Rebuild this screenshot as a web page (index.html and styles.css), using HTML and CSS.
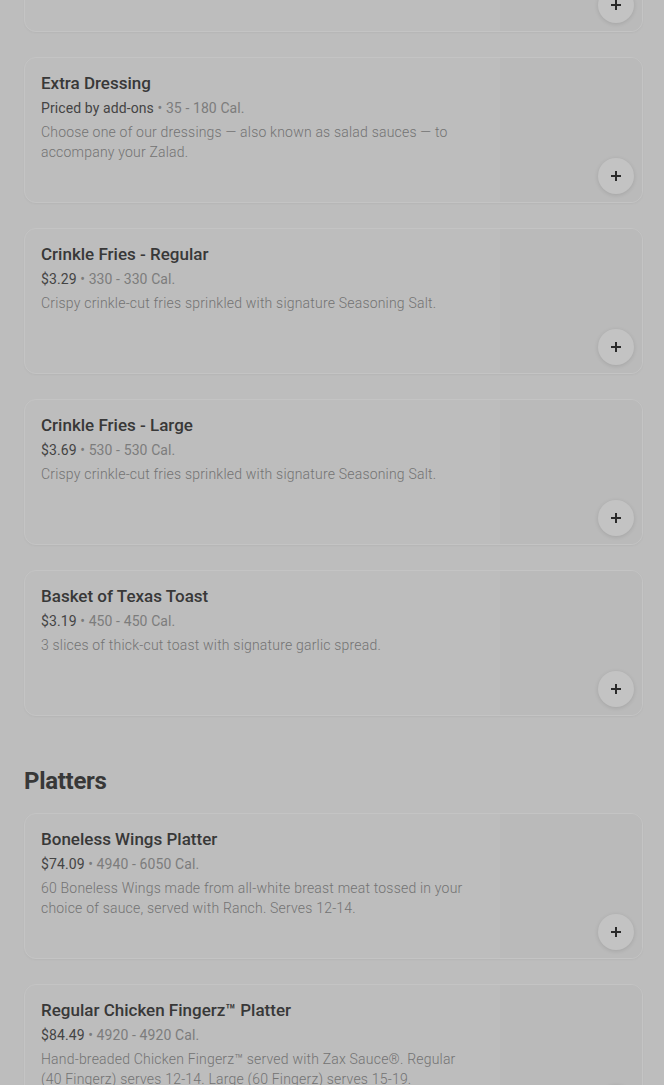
FILE: index.html
```html
<!DOCTYPE html>
<html lang="en">
<head>
<meta charset="utf-8">
<title>Menu</title>
<link rel="stylesheet" href="styles.css">
</head>
<body>
<main class="menu">
  <section class="section">
    <article class="item">
      <div class="info"></div>
      <div class="thumb"><button class="add" aria-label="Add"><svg viewBox="0 0 12 12" width="12" height="12"><path d="M6 1v10M1 6h10" stroke="currentColor" stroke-width="2"/></svg></button></div>
    </article>
    <article class="item">
      <div class="info">
        <h3 class="title">Extra Dressing</h3>
        <p class="meta"><span class="price">Priced by add-ons</span> • 35 - 180 Cal.</p>
        <p class="desc">Choose one of our dressings — also known as salad sauces — to accompany your Zalad.</p>
      </div>
      <div class="thumb"><button class="add" aria-label="Add"><svg viewBox="0 0 12 12" width="12" height="12"><path d="M6 1v10M1 6h10" stroke="currentColor" stroke-width="2"/></svg></button></div>
    </article>
    <article class="item">
      <div class="info">
        <h3 class="title">Crinkle Fries - Regular</h3>
        <p class="meta"><span class="price">$3.29</span> • 330 - 330 Cal.</p>
        <p class="desc">Crispy crinkle-cut fries sprinkled with signature Seasoning Salt.</p>
      </div>
      <div class="thumb"><button class="add" aria-label="Add"><svg viewBox="0 0 12 12" width="12" height="12"><path d="M6 1v10M1 6h10" stroke="currentColor" stroke-width="2"/></svg></button></div>
    </article>
    <article class="item">
      <div class="info">
        <h3 class="title">Crinkle Fries - Large</h3>
        <p class="meta"><span class="price">$3.69</span> • 530 - 530 Cal.</p>
        <p class="desc">Crispy crinkle-cut fries sprinkled with signature Seasoning Salt.</p>
      </div>
      <div class="thumb"><button class="add" aria-label="Add"><svg viewBox="0 0 12 12" width="12" height="12"><path d="M6 1v10M1 6h10" stroke="currentColor" stroke-width="2"/></svg></button></div>
    </article>
    <article class="item">
      <div class="info">
        <h3 class="title">Basket of Texas Toast</h3>
        <p class="meta"><span class="price">$3.19</span> • 450 - 450 Cal.</p>
        <p class="desc">3 slices of thick-cut toast with signature garlic spread.</p>
      </div>
      <div class="thumb"><button class="add" aria-label="Add"><svg viewBox="0 0 12 12" width="12" height="12"><path d="M6 1v10M1 6h10" stroke="currentColor" stroke-width="2"/></svg></button></div>
    </article>
  </section>
  <section class="section">
    <h2 class="heading">Platters</h2>
    <article class="item">
      <div class="info">
        <h3 class="title">Boneless Wings Platter</h3>
        <p class="meta"><span class="price">$74.09</span> • 4940 - 6050 Cal.</p>
        <p class="desc">60 Boneless Wings made from all-white breast meat tossed in your choice of sauce, served with Ranch. Serves 12-14.</p>
      </div>
      <div class="thumb"><button class="add" aria-label="Add"><svg viewBox="0 0 12 12" width="12" height="12"><path d="M6 1v10M1 6h10" stroke="currentColor" stroke-width="2"/></svg></button></div>
    </article>
    <article class="item">
      <div class="info">
        <h3 class="title">Regular Chicken Fingerz™ Platter</h3>
        <p class="meta"><span class="price">$84.49</span> • 4920 - 4920 Cal.</p>
        <p class="desc">Hand-breaded Chicken Fingerz™ served with Zax Sauce®. Regular (40 Fingerz) serves 12-14. Large (60 Fingerz) serves 15-19.</p>
      </div>
      <div class="thumb"><button class="add" aria-label="Add"><svg viewBox="0 0 12 12" width="12" height="12"><path d="M6 1v10M1 6h10" stroke="currentColor" stroke-width="2"/></svg></button></div>
    </article>
  </section>
</main>
</body>
</html>
```

FILE: styles.css
```css
* { box-sizing: border-box; }
html, body { margin: 0; padding: 0; }
body {
  background: #bdbdbd;
  font-family: Roboto, "Liberation Sans", sans-serif;
  color: #333;
  overflow: hidden;
}
.menu {
  padding: 0 21px 0 24px;
  margin-top: -114px;
}
.section {
  display: flex;
  flex-direction: column;
  gap: 25px;
}
.section + .section { margin-top: 49px; }
.heading {
  margin: 0 0 -9px;
  font-size: 24px;
  line-height: 32px;
  font-weight: 700;
  color: #383838;
  letter-spacing: -0.3px;
}
.item {
  display: flex;
  height: 146px;
  border: 1px solid #c4c4c4;
  border-radius: 12px;
  overflow: hidden;
  box-shadow: 0 1px 2px rgba(0,0,0,0.04);
}
.info {
  flex: 1;
  padding: 15px 16px 0 16px;
  min-width: 0;
}
.title {
  margin: 0 0 5px;
  font-size: 17px;
  line-height: 20px;
  font-weight: 500;
  color: #383838;
}
.meta {
  margin: 0 0 4px;
  font-size: 14px;
  line-height: 20px;
  color: #7c7c7c;
  letter-spacing: 0.1px;
}
.price { color: #444; }
.desc {
  margin: 0;
  font-size: 14px;
  line-height: 20px;
  font-weight: 300;
  color: #737373;
  letter-spacing: 0.2px;
  padding-right: 10px;
}
.thumb {
  width: 142px;
  flex: none;
  background: #bababa;
  display: flex;
  align-items: flex-end;
  justify-content: flex-end;
  padding: 0 8px 8px 0;
}
.add {
  width: 36px;
  height: 36px;
  border-radius: 50%;
  border: none;
  background: #c3c3c3;
  color: #2a2a2a;
  display: flex;
  align-items: center;
  justify-content: center;
  padding: 0;
  box-shadow: 0 1px 4px rgba(0,0,0,0.12);
}
```
